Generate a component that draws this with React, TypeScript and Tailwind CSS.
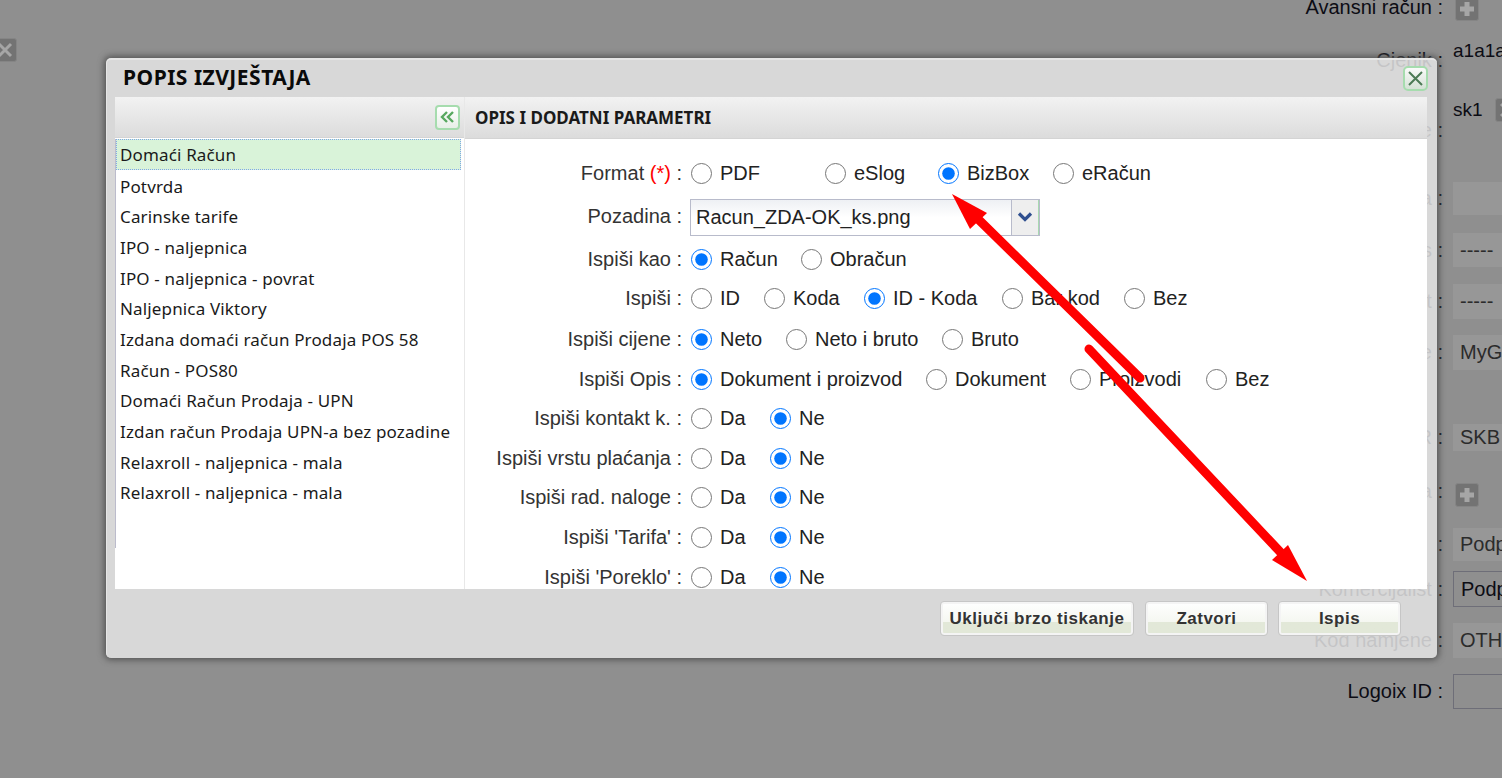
import React from 'react';

const sans = "font-['Liberation_Sans',Arial,sans-serif]";

type Opt = { t: string; w: string; c?: boolean };
type Row = { label: React.ReactNode; mt: string; opts?: Opt[]; select?: boolean };

const daNe = (): Opt[] => [{ t: 'Da', w: 'w-[79px]' }, { t: 'Ne', w: 'w-[79px]', c: true }];

const rows: Row[] = [
  { label: <>Format <span className="text-[#ff0000]">(*)</span> :</>, mt: 'mt-0', opts: [
    { t: 'PDF', w: 'w-[134px]' }, { t: 'eSlog', w: 'w-[113px]' }, { t: 'BizBox', w: 'w-[115px]', c: true }, { t: 'eRačun', w: 'w-[120px]' } ] },
  { label: 'Pozadina :', mt: 'mt-[7px]', select: true },
  { label: 'Ispiši kao :', mt: 'mt-[7px]', opts: [{ t: 'Račun', w: 'w-[110px]', c: true }, { t: 'Obračun', w: 'w-[120px]' }] },
  { label: 'Ispiši :', mt: 'mt-[3px]', opts: [
    { t: 'ID', w: 'w-[73px]' }, { t: 'Koda', w: 'w-[100px]' }, { t: 'ID - Koda', w: 'w-[138px]', c: true }, { t: 'Bar kod', w: 'w-[122px]' }, { t: 'Bez', w: 'w-[80px]' } ] },
  { label: 'Ispiši cijene :', mt: 'mt-[5px]', opts: [{ t: 'Neto', w: 'w-[95px]', c: true }, { t: 'Neto i bruto', w: 'w-[156px]' }, { t: 'Bruto', w: 'w-[100px]' }] },
  { label: 'Ispiši Opis :', mt: 'mt-[4px]', opts: [
    { t: 'Dokument i proizvod', w: 'w-[235px]', c: true }, { t: 'Dokument', w: 'w-[144px]' }, { t: 'Proizvodi', w: 'w-[136px]' }, { t: 'Bez', w: 'w-[80px]' } ] },
  { label: 'Ispiši kontakt k. :', mt: 'mt-[3px]', opts: daNe() },
  { label: 'Ispiši vrstu plaćanja :', mt: 'mt-[4px]', opts: daNe() },
  { label: 'Ispiši rad. naloge :', mt: 'mt-[3px]', opts: daNe() },
  { label: "Ispiši 'Tarifa' :", mt: 'mt-[4px]', opts: daNe() },
  { label: "Ispiši 'Poreklo' :", mt: 'mt-[4px]', opts: daNe() },
];

const reports = [
  'Potvrda', 'Carinske tarife', 'IPO - naljepnica', 'IPO - naljepnica - povrat', 'Naljepnica Viktory',
  'Izdana domaći račun Prodaja POS 58', 'Račun - POS80', 'Domaći Račun Prodaja - UPN',
  'Izdan račun Prodaja UPN-a bez pozadine', 'Relaxroll - naljepnica - mala', 'Relaxroll - naljepnica - mala',
];

function SquareIcon({ kind }: { kind: 'plus' | 'x' }) {
  return (
    <span className="flex h-[24px] w-[24px] items-center justify-center rounded-[3px] bg-[#737373] border border-[#858585]">
      <svg width="16" height="16" viewBox="0 0 16 16" fill="none" stroke="#a6a6a6" strokeWidth={kind === 'plus' ? 5 : 3}>
        {kind === 'plus' ? <path d="M8 1v14M1 8h14" /> : <path d="M2 2l12 12M14 2L2 14" />}
      </svg>
    </span>
  );
}

function Field({ children, bordered, className }: { children?: React.ReactNode; bordered?: boolean; className: string }) {
  return (
    <span className={`flex w-[120px] shrink-0 items-center pl-[7px] text-[20px] ${bordered ? 'border border-[#6e6e78] pl-[5px] text-[#0c0c14]' : 'bg-[#979797] text-[#2b2b2b]'} ${className}`}>
      {children}
    </span>
  );
}

function BgRow({ label, mt, children }: { label: React.ReactNode; mt: string; children?: React.ReactNode }) {
  return (
    <div className={`flex h-[36px] items-center ${mt}`}>
      <span className="flex w-[143px] shrink-0 justify-end whitespace-nowrap text-[20px] text-[#0c0c14]">{label}</span>
      <div className="ml-[10px] flex items-center">{children}</div>
    </div>
  );
}

function Background() {
  return (
    <div className={`ml-auto w-[202px] -mt-[11px] ${sans}`}>
      <BgRow label="Avansni račun :" mt="mt-0"><span className="ml-[2px] mt-[3px] block"><SquareIcon kind="plus" /></span></BgRow>
      <BgRow label="Cjenik :" mt="mt-[17px]"><span className="mb-[18px] text-[19px] text-[#0c0c14]">a1a1a1</span></BgRow>
      <BgRow label="e :" mt="mt-[34px]">
        <span className="mb-[40px] flex items-center gap-[12px]">
          <span className="text-[19px] text-[#0c0c14]">sk1</span>
          <SquareIcon kind="x" />
        </span>
      </BgRow>
      <BgRow label="a :" mt="mt-[32px]"><Field className="h-[33px]" /></BgRow>
      <BgRow label="s :" mt="mt-[16px]"><Field className="h-[34px]">-----</Field></BgRow>
      <BgRow label="t :" mt="mt-[15px]"><Field className="h-[35px]">-----</Field></BgRow>
      <BgRow label="e :" mt="mt-[15px]"><Field className="h-[35px]">MyGLS</Field></BgRow>
      <BgRow label="R :" mt="mt-[49px]"><Field className="h-[27px]">SKB</Field></BgRow>
      <BgRow label="a :" mt="mt-[18px]"><span className="ml-[2px] mt-[8px] block"><SquareIcon kind="plus" /></span></BgRow>
      <BgRow label=":" mt="mt-[17px]"><Field className="h-[33px]">Podpis</Field></BgRow>
      <BgRow label="Komercijalist :" mt="mt-[9px]"><Field bordered className="h-[36px]">Podpis</Field></BgRow>
      <BgRow label="Kod namjene :" mt="mt-[15px]"><Field className="h-[35px]">OTH</Field></BgRow>
      <BgRow label="Logoix ID :" mt="mt-[15px]"><Field bordered className="h-[35px]" /></BgRow>
    </div>
  );
}

function FormRow({ row, index }: { row: Row; index: number }) {
  return (
    <div className={`flex h-[36px] items-center ${row.mt}`}>
      <span className="w-[217px] shrink-0 whitespace-nowrap text-right text-[#333333]">{row.label}</span>
      <div className="ml-[9px] flex items-center">
        {row.select ? (
          <div className="-ml-[1px] mt-[2px] flex h-[37px] w-[350px] border border-[#b8bbcb] bg-gradient-to-b from-[#eef0f4] via-white to-white">
            <span className="flex-1 pl-[5px] leading-[35px] text-[#222222]">Racun_ZDA-OK_ks.png</span>
            <span className="flex w-[28px] items-center justify-center border-l border-r border-l-[#b8bbcb] border-r-[#a8d8b0] bg-[#eeeeee]">
              <svg width="16" height="10" viewBox="0 0 16 10" fill="none" stroke="#2f4f8f" strokeWidth="3.2"><path d="M2 1.5l6 6 6-6" /></svg>
            </span>
          </div>
        ) : (
          row.opts!.map((o) => (
            <label key={o.t} className={`flex shrink-0 items-center gap-[8px] whitespace-nowrap text-[#222222] ${o.w}`}>
              <input type="radio" name={`g${index}`} defaultChecked={o.c} className="m-0 h-[21px] w-[21px] shrink-0" />
              {o.t}
            </label>
          ))
        )}
      </div>
    </div>
  );
}

function Btn({ children, w }: { children: React.ReactNode; w: string }) {
  return (
    <button className={`relative h-[35px] ${w} overflow-hidden rounded-[4px] border border-[#c6c6c6] bg-gradient-to-b from-white from-0% via-[#f5f7f1] via-60% to-[#e2e8d8] to-60% text-[17px] font-bold tracking-[0.5px] text-[#333333] shadow-[inset_0_0_0_2px_#f4f4f4] ${sans}`}>
      {children}
    </button>
  );
}

export default function App() {
  return (
    <div className="relative h-[778px] w-[1502px] overflow-hidden bg-[#8f8f8f]">
      <div className="absolute -left-[7px] top-[38px]"><SquareIcon kind="x" /></div>
      <Background />

      <div className="absolute left-[106px] top-[58px] flex h-[600px] w-[1331px] flex-col rounded-[5px] border-t-2 border-l border-[#e6e6e6] bg-[#e5e5e5]/85 shadow-[0_0_6px_2px_#555555]">
        <div className="flex h-[37px] shrink-0 items-center justify-between pl-[16px] pr-[9px]">
          <h1 className="-mt-[2px] font-['Noto_Sans',sans-serif] text-[21px] font-bold leading-none tracking-[0.5px] text-[#0a0a0a]">POPIS IZVJEŠTAJA</h1>
          <button className="flex h-[25px] w-[25px] items-center justify-center rounded-[5px] border-2 border-[#a6dcae] bg-gradient-to-b from-[#fafafa] to-[#d5e2d6]">
            <svg width="15" height="15" viewBox="0 0 15 15" fill="none" stroke="#4c7a55" strokeWidth="2"><path d="M1 1l13 13M14 1L1 14" /></svg>
          </button>
        </div>

        <div className="ml-[8px] mr-[10px] flex h-[492px] shrink-0 bg-white">
          <div className="flex w-[350px] shrink-0 flex-col border-r border-[#e8e8e8]">
            <div className="flex h-[41px] shrink-0 items-center justify-end border-b border-[#d4d4d4] bg-gradient-to-b from-[#f2f2f2] to-[#dcdcdc] pr-[4px]">
              <button className="flex h-[25px] w-[25px] items-center justify-center rounded-[4px] border-2 border-[#a6dcae] bg-gradient-to-b from-white to-[#e8efe8]">
                <svg width="15" height="12" viewBox="0 0 15 12" fill="none" stroke="#57a85f" strokeWidth="2.4"><path d="M7 1L2 6l5 5M13 1L8 6l5 5" /></svg>
              </button>
            </div>
            <div className="flex-1 pt-[1px] pr-[3px] font-['Noto_Sans',sans-serif] text-[17px] tracking-[0.15px] text-[#1a1a1a]">
              <div className="h-[409px] border-l border-[#bcbccc]">
                <div className="mb-[1px] flex h-[31px] items-center border border-dotted border-[#7fa8e8] bg-[#d9f3d9] pl-[3px]">Domaći Račun</div>
                {reports.map((r, i) => (
                  <div key={i} className="flex h-[30.7px] items-center pl-[4px] whitespace-nowrap">{r}</div>
                ))}
              </div>
            </div>
          </div>

          <div className="flex min-w-0 flex-1 flex-col">
            <div className="flex h-[42px] shrink-0 items-center border-b border-[#d4d4d4] bg-gradient-to-b from-[#f2f2f2] to-[#dcdcdc] pl-[10px] font-['Noto_Sans',sans-serif] text-[17px] font-bold text-[#1a1a1a]">
              OPIS I DODATNI PARAMETRI
            </div>
            <div className={`flex-1 overflow-hidden pt-[16px] text-[20px] ${sans}`}>
              {rows.map((r, i) => <FormRow key={i} row={r} index={i} />)}
            </div>
          </div>
        </div>

        <div className="flex flex-1 items-start justify-end gap-[10px] pt-[12px] pr-[36px]">
          <span className="mr-[1px] flex"><Btn w="w-[194px]">Uključi brzo tiskanje</Btn></span>
          <Btn w="w-[123px]">Zatvori</Btn>
          <Btn w="w-[123px]">Ispis</Btn>
        </div>
      </div>

      <svg className="pointer-events-none absolute left-0 top-0" width="1502" height="778" viewBox="0 0 1502 778">
        <path d="M1140 378L978 219" stroke="#ff0000" strokeWidth="9" strokeLinecap="round" fill="none" />
        <polygon points="952,194 987,213 970,229" fill="#ff0000" />
        <path d="M1089 349L1285 557" stroke="#ff0000" strokeWidth="9" strokeLinecap="round" fill="none" />
        <polygon points="1307,581 1288,545 1272,560" fill="#ff0000" />
      </svg>
    </div>
  );
}
